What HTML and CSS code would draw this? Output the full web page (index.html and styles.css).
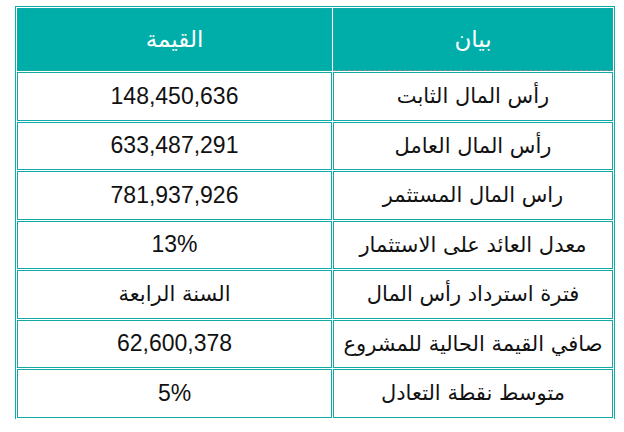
FILE: index.html
```html
<!DOCTYPE html>
<html lang="ar">
<head>
<meta charset="utf-8">
<title>جدول</title>
<link rel="stylesheet" href="styles.css">
</head>
<body>
<div class="page">
<table class="fin" dir="rtl">
  <thead>
    <tr class="head-row">
      <th class="col-label">بيان</th>
      <th class="col-value">القيمة</th>
    </tr>
  </thead>
  <tbody>
    <tr><td class="label">رأس المال الثابت</td><td class="num">148,450,636</td></tr>
    <tr><td class="label">رأس المال العامل</td><td class="num">633,487,291</td></tr>
    <tr><td class="label">راس المال المستثمر</td><td class="num">781,937,926</td></tr>
    <tr><td class="label">معدل العائد على الاستثمار</td><td class="num">13%</td></tr>
    <tr><td class="label">فترة استرداد رأس المال</td><td class="label">السنة الرابعة</td></tr>
    <tr><td class="label">صافي القيمة الحالية للمشروع</td><td class="num">62,600,378</td></tr>
    <tr><td class="label">متوسط نقطة التعادل</td><td class="num">5%</td></tr>
  </tbody>
</table>
</div>
</body>
</html>
```
FILE: styles.css
```css
html, body {
  margin: 0;
  padding: 0;
  background: #ffffff;
}
.page {
  padding: 6px 0 0 15px;
}
.fin {
  width: 600px;
  table-layout: fixed;
  border-collapse: separate;
  border-spacing: 1px;
  border: 1px solid #12aaa6;
  border-bottom: none;
  font-family: "Liberation Sans", "DejaVu Sans", sans-serif;
  font-size: 23px;
  color: #111;
}
.fin th, .fin td {
  border: 1px solid #12aaa6;
  padding: 0;
  text-align: center;
  vertical-align: middle;
  font-weight: normal;
}
.head-row {
  height: 63px;
}
.fin th {
  background: #00aea9;
  color: #ffffff;
}
.col-label {
  width: 278px;
  border-bottom: 1px dashed #8a8a8a !important;
}
.fin tbody tr {
  height: 48.5px;
}
.num {
  font-family: "Liberation Sans", sans-serif;
}
.label {
  font-family: "DejaVu Sans", sans-serif;
  font-size: 21px;
}
```
